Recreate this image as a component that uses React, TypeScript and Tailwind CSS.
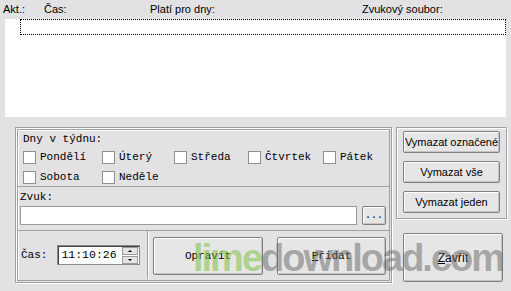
import React from "react";

const ui = { fontFamily: '"Liberation Sans", Arial, sans-serif' };
const mono = { fontFamily: '"Liberation Mono", "Courier New", monospace' };

const Check = ({ label, w }: { label: string; w: string }) => (
  <div className={`flex items-center ${w}`}>
    <div className="w-[13px] h-[13px] bg-white border border-[#8e8f8f] shrink-0" />
    <span className="ml-[4px] text-[11px] leading-[13px] text-black" style={mono}>
      {label}
    </span>
  </div>
);

const Btn = ({ children, className }: { children: React.ReactNode; className: string }) => (
  <div
    className={`flex items-center justify-center bg-[#e6e6e6] border border-[#7f7f7f] rounded-[2px] shadow-[inset_1px_1px_0_#fff,inset_-1px_-1px_0_#c4c4c4] text-black ${className}`}
  >
    {children}
  </div>
);

const App = () => {
  return (
    <div className="relative w-[511px] h-[291px] bg-[#e2e2e4] overflow-hidden" style={ui}>
      {/* Header */}
      <div className="flex h-[19px] items-center pl-[3px] text-[11px] text-black leading-none">
        <span className="w-[41px]">Akt.:</span>
        <span className="w-[106px]">Čas:</span>
        <span className="w-[212px]">Platí pro dny:</span>
        <span>Zvukový soubor:</span>
      </div>

      {/* List */}
      <div className="ml-[5px] w-[501px] h-[98px] bg-white pl-[15px]">
        <div className="h-[16px] border border-dotted border-black" />
      </div>

      <div className="flex pl-[15px] pt-[10px]">
        {/* Left group */}
        <div className="w-[377px] h-[156px] p-[1px] border border-[#a0a0a0] shadow-[inset_1px_1px_0_#fff,1px_1px_0_#fff] flex flex-col">
          {/* Days */}
          <div className="h-[58px] border border-[#a0a0a0] shadow-[inset_1px_1px_0_#fff] pl-[5px] pt-[3px]">
            <div className="text-[11px] leading-[12px] text-black" style={mono}>
              Dny v týdnu:
            </div>
            <div className="flex mt-[6px]">
              <Check label="Pondělí" w="w-[79px]" />
              <Check label="Úterý" w="w-[72px]" />
              <Check label="Středa" w="w-[74px]" />
              <Check label="Čtvrtek" w="w-[75px]" />
              <Check label="Pátek" w="w-[60px]" />
            </div>
            <div className="flex mt-[7px]">
              <Check label="Sobota" w="w-[79px]" />
              <Check label="Neděle" w="w-[72px]" />
            </div>
          </div>

          {/* Sound */}
          <div className="h-[44px] border border-[#a0a0a0] border-t-0 shadow-[inset_1px_0_0_#fff] pl-[2px] pt-[4px]">
            <div className="text-[11px] leading-[12px] text-black" style={mono}>
              Zvuk:
            </div>
            <div className="flex items-center mt-[3px]">
              <div className="w-[337px] h-[19px] bg-white border border-[#9a9a9a]" />
              <Btn className="ml-[5px] w-[24px] h-[19px] text-[10px]">
                <span style={mono}>...</span>
              </Btn>
            </div>
          </div>

          {/* Bottom row */}
          <div className="flex-1 flex border border-[#a0a0a0] border-t-0 shadow-[inset_1px_0_0_#fff]">
            <div className="w-[130px] h-[48px] border-r border-[#a0a0a0] shadow-[1px_0_0_#fff] flex items-center pl-[3px]">
              <span className="text-[11px] text-black" style={mono}>
                Čas:
              </span>
              <div className="ml-[10px] w-[83px] h-[20px] bg-white border border-[#8a8a8a] shadow-[inset_1px_1px_0_#404040] flex items-center">
                <span className="ml-[3px] text-[11.5px] leading-none text-black" style={mono}>
                  11:10:26
                </span>
                <div className="ml-auto mr-[1px] w-[16px] flex flex-col gap-[1px]">
                  <div className="h-[8px] bg-[#e4e4e4] border border-[#9a9a9a] flex items-center justify-center">
                    <div className="w-0 h-0 border-x-[2px] border-x-transparent border-b-[2px] border-b-black" />
                  </div>
                  <div className="h-[8px] bg-[#e4e4e4] border border-[#9a9a9a] flex items-center justify-center">
                    <div className="w-0 h-0 border-x-[2px] border-x-transparent border-t-[2px] border-t-black" />
                  </div>
                </div>
              </div>
            </div>
            <Btn className="ml-[5px] mt-[6px] w-[110px] h-[38px] text-[11px]">
              <span style={mono}>Opravit</span>
            </Btn>
            <Btn className="ml-[14px] mt-[6px] w-[109px] h-[38px] text-[11px]">
              <span style={mono}>
                <span className="underline">P</span>řidat
              </span>
            </Btn>
          </div>
        </div>

        {/* Right column */}
        <div className="ml-[4px] flex flex-col">
          <div className="w-[111px] h-[92px] border border-[#a0a0a0] shadow-[inset_1px_1px_0_#fff,1px_1px_0_#fff] flex flex-col items-center pt-[3px] gap-[8px]">
            <Btn className="w-[97px] h-[22px] text-[11px]">Vymazat označené</Btn>
            <Btn className="w-[97px] h-[22px] text-[11px]">Vymazat vše</Btn>
            <Btn className="w-[97px] h-[22px] text-[11px]">Vymazat jeden</Btn>
          </div>
          <Btn className="ml-[7px] mt-[14px] w-[100px] h-[49px] text-[12px]">
            <span>
              <span className="underline">Z</span>avřít
            </span>
          </Btn>
        </div>
      </div>

      {/* Watermark */}
      <div className="absolute left-[193px] top-[239px] text-[38px] leading-[38px] font-bold tracking-[-2px] pointer-events-none whitespace-nowrap">
        <span className="text-[#7cc243]/55">lime</span>
        <span className="text-[#6e6e6e]/55">download.com</span>
      </div>
    </div>
  );
};

export default App;
